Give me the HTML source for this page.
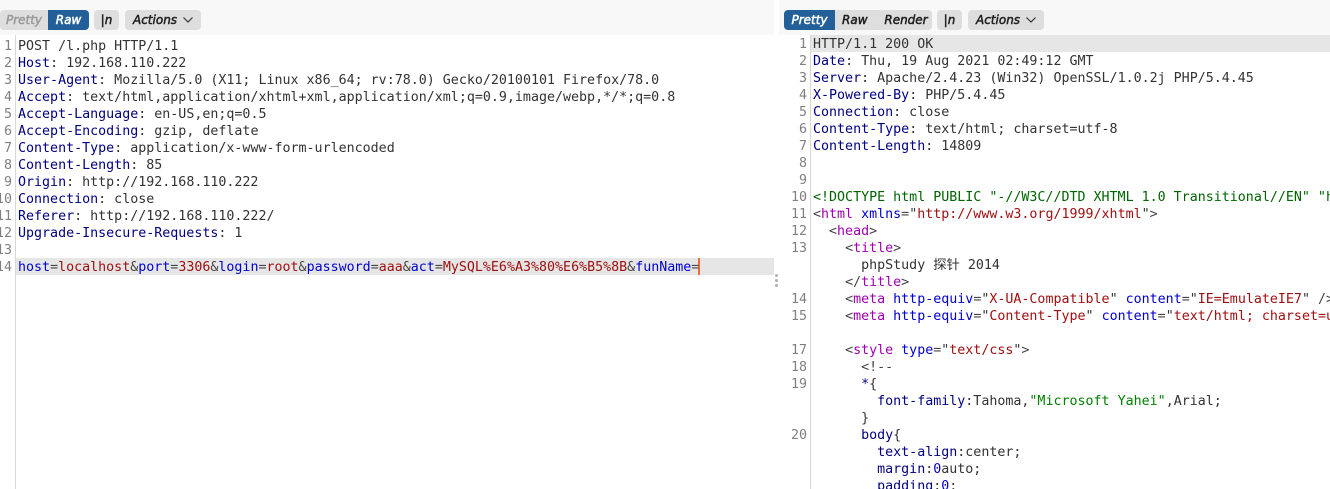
<!DOCTYPE html>
<html><head><meta charset="utf-8">
<style>
html,body{margin:0;padding:0;background:#fff;width:1330px;height:489px;overflow:hidden}
.abs{position:absolute}
.tb{position:absolute;top:0;height:35px;background:#f8f8f8}
.btn{position:absolute;top:10px;height:20px;background:#dedede;font:oblique 12px/21px "DejaVu Sans",sans-serif;-webkit-text-stroke:.5px currentColor;color:#222;text-align:center;box-sizing:border-box;white-space:pre}
.blue{background:#236099;color:#fff}
.code{position:absolute;margin:0;font:13.32px/17px "DejaVu Sans Mono",monospace;color:#333;white-space:pre}
.num{position:absolute;margin:0;font:13.32px/17px "DejaVu Sans Mono",monospace;color:#808080;white-space:pre;text-align:right}
.k{color:#000080}.b{color:#0000d0}.r{color:#a01010}.g{color:#006400}.gg{color:#008000}.p{color:#a000b0}.o{color:#444}
</style></head><body>
<div class="tb" style="left:0;width:774px"></div>
<div class="tb" style="left:779px;width:551px"></div>

<div class="btn" style="left:0;width:48px;color:#9a9a9a;border-radius:4px 0 0 4px">Pretty</div>
<div class="btn blue" style="left:48px;width:41px;border-radius:0 4px 4px 0">Raw</div>
<div class="btn" style="left:94px;width:25px;border-radius:4px">|n</div>
<div class="btn" style="left:125px;width:76px;border-radius:4px;text-align:left;padding-left:8px">Actions</div>
<svg class="abs" style="left:182px;top:16px" width="12" height="8"><path d="M1.500 1.500L6 6L10.500 1.500" fill="none" stroke="#333" stroke-width="1.200"/></svg>

<div class="btn blue" style="left:784px;width:51px;border-radius:4px 0 0 4px">Pretty</div>
<div class="btn" style="left:835px;width:97px;border-radius:0 4px 4px 0;text-align:left;padding-left:7px">Raw</div>
<div class="btn" style="left:884px;width:44px;background:none">Render</div>
<div class="btn" style="left:937px;width:25px;border-radius:4px">|n</div>
<div class="btn" style="left:968px;width:76px;border-radius:4px;text-align:left;padding-left:8px">Actions</div>
<svg class="abs" style="left:1025px;top:16px" width="12" height="8"><path d="M1.500 1.500L6 6L10.500 1.500" fill="none" stroke="#333" stroke-width="1.200"/></svg>

<!-- left editor -->
<div class="abs" style="left:15px;top:35px;width:1px;height:454px;background:#d8d8d8"></div>
<div class="abs" style="left:16px;top:258px;width:758px;height:17px;background:#e6e6e6"></div>
<div class="abs" style="left:698px;top:258px;width:2px;height:17px;background:#f26a35"></div>
<pre class="num" style="left:0;top:38px;width:12px;overflow:hidden;direction:rtl">1
2
3
4
5
6
7
8
9
10
11
12
13
14</pre>
<pre class="code" style="left:18px;top:38px">POST /l.php HTTP/1.1
<span class="k">Host</span>: 192.168.110.222
<span class="k">User-Agent</span>: Mozilla/5.0 (X11; Linux x86_64; rv:78.0) Gecko/20100101 Firefox/78.0
<span class="k">Accept</span>: text/html,application/xhtml+xml,application/xml;q=0.9,image/webp,*/*;q=0.8
<span class="k">Accept-Language</span>: en-US,en;q=0.5
<span class="k">Accept-Encoding</span>: gzip, deflate
<span class="k">Content-Type</span>: application/x-www-form-urlencoded
<span class="k">Content-Length</span>: 85
<span class="k">Origin</span>: http://192.168.110.222
<span class="k">Connection</span>: close
<span class="k">Referer</span>: http://192.168.110.222/
<span class="k">Upgrade-Insecure-Requests</span>: 1

<span class="b">host</span><span class="o">=</span><span class="r">localhost</span><span class="o">&amp;</span><span class="b">port</span><span class="o">=</span><span class="r">3306</span><span class="o">&amp;</span><span class="b">login</span><span class="o">=</span><span class="r">root</span><span class="o">&amp;</span><span class="b">password</span><span class="o">=</span><span class="r">aaa</span><span class="o">&amp;</span><span class="b">act</span><span class="o">=</span><span class="r">MySQL%E6%A3%80%E6%B5%8B</span><span class="o">&amp;</span><span class="b">funName</span><span class="o">=</span></pre>

<!-- splitter dots -->
<div class="abs" style="left:775px;top:274px;width:3px;height:3px;background:#b0b0b0;border-radius:50%"></div>
<div class="abs" style="left:775px;top:279px;width:3px;height:3px;background:#b0b0b0;border-radius:50%"></div>
<div class="abs" style="left:775px;top:284px;width:3px;height:3px;background:#b0b0b0;border-radius:50%"></div>

<!-- right editor -->
<div class="abs" style="left:810px;top:35px;width:1px;height:454px;background:#d8d8d8"></div>
<div class="abs" style="left:811px;top:35px;width:519px;height:17px;background:#e6e6e6"></div>
<pre class="num" style="left:786px;top:36px;width:21px">1
2
3
4
5
6
7
8
9
10
11
12
13


14
15

17
18
19


20</pre>
<pre class="code" style="left:813px;top:36px;width:517px;height:453px;overflow:hidden">HTTP/1.1 200 OK
<span class="k">Date</span>: Thu, 19 Aug 2021 02:49:12 GMT
<span class="k">Server</span>: Apache/2.4.23 (Win32) OpenSSL/1.0.2j PHP/5.4.45
<span class="k">X-Powered-By</span>: PHP/5.4.45
<span class="k">Connection</span>: close
<span class="k">Content-Type</span>: text/html; charset=utf-8
<span class="k">Content-Length</span>: 14809


<span class="g">&lt;!DOCTYPE html PUBLIC "-//W3C//DTD XHTML 1.0 Transitional//EN" "http://www.w3.org/TR/xhtml1/DTD/xhtml1-transitional.dtd"&gt;</span>
<span class="o">&lt;</span><span class="p">html</span> <span class="b">xmlns</span><span class="o">=</span>"<span class="r">http://www.w3.org/1999/xhtml</span>"<span class="o">&gt;</span>
  <span class="o">&lt;</span><span class="p">head</span><span class="o">&gt;</span>
    <span class="o">&lt;</span><span class="p">title</span><span class="o">&gt;</span>
      phpStudy <span style="font-family:'DejaVu Sans Mono','WenQuanYi Zen Hei','Noto Sans CJK SC',monospace">探针</span> 2014
    <span class="o">&lt;/</span><span class="p">title</span><span class="o">&gt;</span>
    <span class="o">&lt;</span><span class="p">meta</span> <span class="b">http-equiv</span><span class="o">=</span>"<span class="r">X-UA-Compatible</span>" <span class="b">content</span><span class="o">=</span>"<span class="r">IE=EmulateIE7</span>" <span class="o">/&gt;</span>
    <span class="o">&lt;</span><span class="p">meta</span> <span class="b">http-equiv</span><span class="o">=</span>"<span class="r">Content-Type</span>" <span class="b">content</span><span class="o">=</span>"<span class="r">text/html; charset=utf-8</span>" <span class="o">/&gt;</span>

    <span class="o">&lt;</span><span class="p">style</span> <span class="b">type</span><span class="o">=</span>"<span class="r">text/css</span>"<span class="o">&gt;</span>
      <span class="o">&lt;!--</span>
      <span class="k">*</span>{
        <span class="k">font-family</span>:Tahoma,<span class="gg">"Microsoft Yahei"</span>,Arial;
      }
      <span class="k">body</span>{
        <span class="k">text-align</span>:center;
        <span class="k">margin</span>:<span class="b">0</span>auto;
        <span class="k">padding</span>:<span class="b">0</span>;</pre>
</body></html>
